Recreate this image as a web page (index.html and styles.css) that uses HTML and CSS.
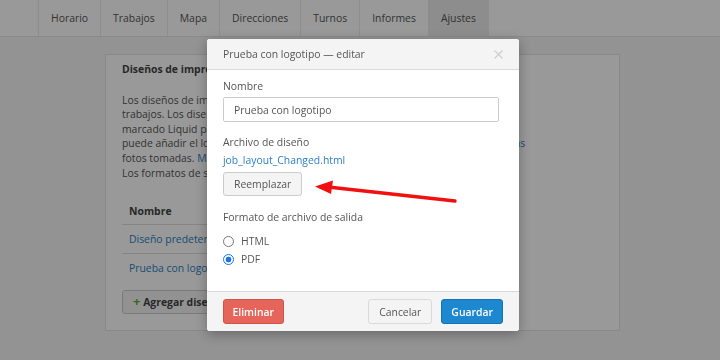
FILE: index.html
```html
<!DOCTYPE html>
<html lang="es">
<head>
    <meta charset="UTF-8">
    <title>Ajustes - Diseños de impresión</title>
    <link rel="stylesheet" href="styles.css">
</head>
<body>
    <nav class="topnav">
        <ul class="nav-list">
            <li class="nav-item">Horario</li>
            <li class="nav-item">Trabajos</li>
            <li class="nav-item">Mapa</li>
            <li class="nav-item">Direcciones</li>
            <li class="nav-item">Turnos</li>
            <li class="nav-item">Informes</li>
            <li class="nav-item active">Ajustes</li>
        </ul>
    </nav>

    <section class="panel">
        <h2 class="panel-title">Diseños de impresión</h2>
        <p class="panel-text">
            Los diseños de impresión le permiten cambiar el aspecto de los informes de<br>
            trabajos. Los diseños son archivos HTML que usan el lenguaje de<br>
            marcado Liquid para mostrar la información del trabajo. Por ejemplo, se<br>
            puede añadir el logotipo de sus empresas, las firmas del cliente y también las <a href="#">notas</a><br>
            fotos tomadas. <a href="#">Más información sobre Liquid</a><br>
            Los formatos de salida disponibles son HTML y PDF.
        </p>

        <table class="layouts">
            <thead>
                <tr><th>Nombre</th></tr>
            </thead>
            <tbody>
                <tr><td><a href="#">Diseño predeterminado</a></td></tr>
                <tr><td><a href="#">Prueba con logotipo</a></td></tr>
            </tbody>
        </table>

        <button class="btn add-btn"><span class="plus">+</span> Agregar diseño</button>
    </section>

    <div class="backdrop"></div>

    <div class="modal">
        <div class="modal-header">
            <span class="modal-title">Prueba con logotipo — editar</span>
            <svg class="close" width="9" height="9" viewBox="0 0 9 9">
                <path d="M0.5 0.5 L8.5 8.5 M8.5 0.5 L0.5 8.5" stroke="#cfcfcf" stroke-width="1.3" fill="none"/>
            </svg>
        </div>

        <div class="modal-body">
            <label class="field-label" for="layout_name">Nombre</label>
            <input class="text-input" type="text" id="layout_name" value="Prueba con logotipo">

            <div class="field-label file-label">Archivo de diseño</div>
            <a class="file-link" href="#">job_layout_Changed.html</a>
            <button class="btn replace-btn">Reemplazar</button>

            <div class="field-label format-label">Formato de archivo de salida</div>
            <label class="radio-row"><input type="radio" name="format"> HTML</label>
            <label class="radio-row"><input type="radio" name="format" checked> PDF</label>
        </div>

        <div class="modal-footer">
            <button class="btn btn-danger">Eliminar</button>
            <div class="footer-right">
                <button class="btn btn-default">Cancelar</button>
                <button class="btn btn-primary">Guardar</button>
            </div>
        </div>
    </div>

    <!-- annotation arrow pointing at the replace button -->
    <svg class="arrow" width="720" height="360" viewBox="0 0 720 360">
        <line x1="455" y1="201" x2="328" y2="187" stroke="#f10f0f" stroke-width="3.4" stroke-linecap="round"/>
        <polygon points="315,186.5 333,180.5 331,194" fill="#f10f0f"/>
    </svg>
</body>
</html>
```

FILE: styles.css
```css
* {
    margin: 0;
    padding: 0;
    box-sizing: border-box;
}

body {
    font-family: 'Open Sans', 'DejaVu Sans', sans-serif;
    font-size: 10.4px;
    color: #555;
    background: #f5f5f5;
    width: 720px;
    height: 360px;
    overflow: hidden;
    position: relative;
}

a {
    color: #2d7fc1;
    text-decoration: none;
}

/* Top navigation */
.topnav {
    background: #fff;
    border-bottom: 1px solid #e6e6e6;
}

.nav-list {
    display: flex;
    list-style: none;
    margin-left: 38px;
}

.nav-item {
    padding: 0 12px;
    line-height: 36px;
    border-left: 1px solid #ebebeb;
    color: #555;
}

.nav-item:last-child {
    border-right: 1px solid #ebebeb;
}

.nav-item.active {
    background: #ececec;
}

/* Background panel */
.panel {
    width: 515px;
    margin: 17px 0 0 105px;
    background: #fff;
    border: 1px solid #e3e3e3;
    padding: 6px 16px 16px;
}

.panel-title {
    font-size: 10.4px;
    font-weight: 700;
    line-height: 16px;
    color: #444;
}

.panel-text {
    margin-top: 15.7px;
    line-height: 14.6px;
    white-space: nowrap;
    overflow: hidden;
}

.layouts {
    width: 380px;
    margin-top: 17.7px;
    border-collapse: collapse;
}

.layouts th {
    text-align: left;
    font-weight: 700;
    color: #444;
    line-height: 16px;
    padding: 5px 7px;
    border-bottom: 1px solid #ddd;
}

.layouts td {
    line-height: 16px;
    padding: 6px 7px;
    border-bottom: 1px solid #ddd;
}

.layouts tbody tr:last-child td {
    border-bottom: none;
}

.btn {
    font-family: inherit;
    font-size: 10.4px;
    border-radius: 3px;
    cursor: pointer;
    line-height: 16px;
}

.add-btn {
    margin-top: 8px;
    height: 24px;
    padding: 0 10px;
    background: #f4f4f4;
    border: 1px solid #ccc;
    font-weight: 700;
    color: #444;
}

.plus {
    color: #5fae2d;
    font-size: 13px;
}

/* Modal */
.backdrop {
    position: fixed;
    inset: 0;
    background: rgba(0, 0, 0, 0.4);
}

.modal {
    position: absolute;
    top: 39px;
    left: 207px;
    width: 312px;
    background: #fff;
    border-radius: 3px;
    box-shadow: 0 3px 12px rgba(0, 0, 0, 0.3);
    overflow: hidden;
}

.modal-header {
    height: 31px;
    display: flex;
    align-items: center;
    justify-content: space-between;
    padding: 0 16px 0 16px;
    background: #f4f4f4;
    border-bottom: 1px solid #d9d9d9;
}

.modal-title {
    color: #555;
}

.close {
    display: block;
}

.modal-body {
    display: flex;
    flex-direction: column;
    align-items: flex-start;
    padding: 8px 16px 23px;
}

.field-label {
    line-height: 16px;
    color: #555;
}

.text-input {
    margin-top: 3px;
    width: 276px;
    height: 25px;
    padding: 0 10px;
    border: 1px solid #ccc;
    border-radius: 2px;
    font-family: inherit;
    font-size: 10.4px;
    color: #555;
}

.file-label {
    margin-top: 12px;
}

.file-link {
    margin-top: 2px;
    line-height: 16px;
}

.replace-btn {
    margin-top: 4px;
    height: 24px;
    padding: 0 10px;
    background: #f4f4f4;
    border: 1px solid #ccc;
    color: #555;
}

.format-label {
    margin-top: 13px;
}

.radio-row {
    display: flex;
    align-items: center;
    gap: 7px;
    height: 18px;
    color: #555;
}

.format-label + .radio-row {
    margin-top: 7px;
}

.radio-row input {
    appearance: none;
    width: 11px;
    height: 11px;
    border: 1px solid #777;
    border-radius: 50%;
    background: #fff;
}

.radio-row input:checked {
    border-color: #1a73e8;
    background: radial-gradient(circle, #1a73e8 0 2.6px, #fff 3.2px);
}

.modal-footer {
    display: flex;
    justify-content: space-between;
    padding: 7px 16px;
    background: #f4f4f4;
    border-top: 1px solid #d9d9d9;
}

.footer-right {
    display: flex;
    gap: 9px;
}

.modal-footer .btn {
    height: 25px;
    padding: 0 10px;
}

.modal-footer .btn-danger {
    padding: 0 8.5px;
    background: #e6655a;
    border: 1px solid #cf5449;
    color: #fff;
    font-weight: 600;
}

.modal-footer .btn-default {
    background: #f4f4f4;
    border: 1px solid #dadada;
    color: #555;
}

.modal-footer .btn-primary {
    padding: 0 9px;
    background: #1d87cf;
    border: 1px solid #1873b1;
    color: #fff;
    font-weight: 600;
}

.arrow {
    position: absolute;
    top: 0;
    left: 0;
    pointer-events: none;
}
```
